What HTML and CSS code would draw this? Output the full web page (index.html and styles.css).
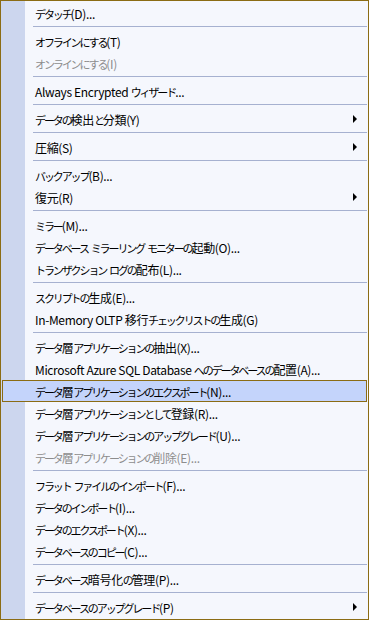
FILE: index.html
```html
<!DOCTYPE html>
<html lang="ja">
<head>
  <meta charset="UTF-8">
  <meta name="viewport" content="width=device-width, initial-scale=1.0">
  <title>タスク</title>
  <link rel="stylesheet" href="styles.css">
</head>
<body>
  <div class="menu">
    <div class="item"><span><span class="k">デタッチ</span>(D)...</span></div>
    <div class="sep"></div>
    <div class="item"><span><span class="k">オフラインにする</span>(T)</span></div>
    <div class="item off"><span><span class="k">オンラインにする</span>(I)</span></div>
    <div class="sep"></div>
    <div class="item"><span>Always Encrypted <span class="k">ウィザード</span>...</span></div>
    <div class="sep"></div>
    <div class="item sub"><span><span class="k">データの</span>検出<span class="k">と</span>分類(Y)</span></div>
    <div class="sep"></div>
    <div class="item sub"><span>圧縮(S)</span></div>
    <div class="sep"></div>
    <div class="item"><span><span class="k">バックアップ</span>(B)...</span></div>
    <div class="item sub"><span>復元(R)</span></div>
    <div class="sep"></div>
    <div class="item"><span><span class="k">ミラー</span>(M)...</span></div>
    <div class="item"><span><span class="k">データベース ミラーリング モニターの</span>起動(O)...</span></div>
    <div class="item"><span><span class="k">トランザクション ログの</span>配布(L)...</span></div>
    <div class="sep"></div>
    <div class="item"><span><span class="k">スクリプトの</span>生成(E)...</span></div>
    <div class="item"><span>In-Memory OLTP 移行<span class="k">チェックリストの</span>生成(G)</span></div>
    <div class="sep"></div>
    <div class="item"><span><span class="k">データ</span>層<span class="k">アプリケーションの</span>抽出(X)...</span></div>
    <div class="item"><span>Microsoft Azure SQL Database <span class="k">へのデータベースの</span>配置(A)...</span></div>
    <div class="item hot"><span><span class="k">データ</span>層<span class="k">アプリケーションのエクスポート</span>(N)...</span></div>
    <div class="item"><span><span class="k">データ</span>層<span class="k">アプリケーションとして</span>登録(R)...</span></div>
    <div class="item"><span><span class="k">データ</span>層<span class="k">アプリケーションのアップグレード</span>(U)...</span></div>
    <div class="item off"><span><span class="k">データ</span>層<span class="k">アプリケーションの</span>削除(E)...</span></div>
    <div class="sep"></div>
    <div class="item"><span><span class="k">フラット ファイルのインポート</span>(F)...</span></div>
    <div class="item"><span><span class="k">データのインポート</span>(I)...</span></div>
    <div class="item"><span><span class="k">データのエクスポート</span>(X)...</span></div>
    <div class="item"><span><span class="k">データベースのコピー</span>(C)...</span></div>
    <div class="sep"></div>
    <div class="item"><span><span class="k">データベース</span>暗号化<span class="k">の</span>管理(P)...</span></div>
    <div class="sep"></div>
    <div class="item sub"><span><span class="k">データベースのアップグレード</span>(P)</span></div>
  </div>
</body>
</html>
```
FILE: styles.css
```css
body { margin: 0; }
.menu {
  width: 369px; height: 620px; box-sizing: border-box;
  border: 1px solid #8b6c14; padding: 1px 0;
  background: linear-gradient(to right, #ccd6ee 24px, #f5f7fd 24px);
  font-family: "Noto Sans CJK JP", sans-serif; font-size: 12px; color: #000;
  letter-spacing: -0.35px;
}
.item {
  display: flex; align-items: center;
  height: 22px; box-sizing: border-box;
  margin: 0 1px; padding-left: 32px;
  border: 1px solid transparent;
  white-space: nowrap;
}
/* kana runs: narrower, like the UI font */
.k { font-size: 11px; letter-spacing: -2.1px; word-spacing: 2.5px; }
.item.off { color: #8d8d8d; }
.item.hot { background: #c4d4fb; border-color: #8b6c14; }
.item.sub::after {
  content: ""; margin-left: auto; margin-right: 9px;
  border-left: 4px solid #000;
  border-top: 4px solid transparent; border-bottom: 4px solid transparent;
}
.sep { height: 1px; margin: 2px 1px 3px 32px; background: #a6b1d0; }
```
